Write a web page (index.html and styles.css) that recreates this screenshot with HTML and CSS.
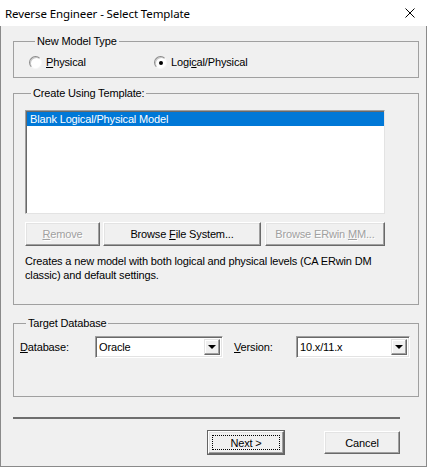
FILE: index.html
```html
<!DOCTYPE html>
<html lang="en">
<head>
<meta charset="UTF-8">
<title>Reverse Engineer - Select Template</title>
<link rel="stylesheet" href="styles.css">
</head>
<body>
<div class="window">
  <!-- title bar -->
  <div class="titlebar">
    <span class="title">Reverse Engineer - Select Template</span>
    <svg class="close" viewBox="0 0 10 10">
      <path d="M0.5 0.5L9.5 9.5M9.5 0.5L0.5 9.5"/>
    </svg>
  </div>

  <div class="client">
    <!-- model type -->
    <fieldset class="group group-type">
      <legend>New Model Type</legend>
      <div class="radios">
        <label class="radio"><span class="dot"></span><span><u>P</u>hysical</span></label>
        <label class="radio checked"><span class="dot"></span><span>Logi<u>c</u>al/Physical</span></label>
      </div>
    </fieldset>

    <!-- template -->
    <fieldset class="group group-template">
      <legend>Create Using Template:</legend>
      <div class="listbox">
        <div class="item selected">Blank Logical/Physical Model</div>
      </div>
      <div class="btn-row">
        <button class="btn btn-remove" disabled><u>R</u>emove</button>
        <button class="btn btn-browse">Browse <u>F</u>ile System...</button>
        <button class="btn btn-mm" disabled>Browse ERwin <u>M</u>M...</button>
      </div>
      <p class="desc">Creates a new model with both logical and physical levels (CA ERwin DM classic) and default settings.</p>
    </fieldset>

    <!-- target database -->
    <fieldset class="group group-target">
      <legend>Target Database</legend>
      <div class="db-row">
        <span class="lbl lbl-db"><u>D</u>atabase:</span>
        <div class="combo combo-db"><span class="value">Oracle</span><span class="arrow"></span></div>
        <span class="lbl lbl-ver"><u>V</u>ersion:</span>
        <div class="combo combo-ver"><span class="value">10.x/11.x</span><span class="arrow"></span></div>
      </div>
    </fieldset>

    <div class="separator"></div>

    <div class="footer">
      <button class="btn btn-default">Next &gt;</button>
      <button class="btn">Cancel</button>
    </div>
  </div>
</div>
</body>
</html>
```

FILE: styles.css
```css
/* page */
body {
margin: 0;
background: #f0f0f0;
font-family: "Liberation Sans", Arial, sans-serif;
font-size: 11px;
letter-spacing: -0.15px;
color: #000;
}

.window {
width: 427px;
height: 467px;
box-sizing: border-box;
display: flex;
flex-direction: column;
}

/* title bar */
.titlebar {
height: 26px;
flex: none;
background: #fff;
display: flex;
align-items: center;
justify-content: space-between;
padding: 0 12px 0 5px;
}

.title {
font-family: "Noto Sans", sans-serif;
font-size: 11.5px;
letter-spacing: -0.1px;
}

.close {
width: 10px;
height: 10px;
stroke: #000;
stroke-width: 1;
fill: none;
}

/* client area */
.client {
flex: 1;
border: 1px solid #8a8a8a;
border-top: none;
padding: 9px 7px 0 12px;
}

/* group boxes */
.group {
margin: 0;
border: 1px solid #a0a0a0;
padding: 0;
}

.group legend {
margin-left: 6px;
padding: 0 2px;
line-height: 13px;
}

.group-type {
padding: 8px 0 8px 15px;
}

.group-template {
margin-top: 9px;
padding: 10px 0 22px 11px;
}

.group-target {
margin-top: 12px;
padding: 6px 0 38px 6px;
}

/* radios */
.radios {
display: flex;
height: 13px;
}

.radio {
display: flex;
align-items: center;
gap: 4px;
line-height: 13px;
}

.radio:first-child {
width: 125px;
}

.dot {
width: 11px;
height: 11px;
border-radius: 50%;
border: 1px solid;
border-color: #8a8a8a #f8f8f8 #f8f8f8 #8a8a8a;
background: #fff;
box-shadow: inset 1px 1px #c8c8c8;
display: flex;
align-items: center;
justify-content: center;
}

.checked .dot::after {
content: "";
width: 4px;
height: 4px;
border-radius: 50%;
background: #000;
}

/* list box */
.listbox {
width: 360px;
height: 104px;
box-sizing: border-box;
background: #fff;
border: 1px solid;
border-color: #a0a0a0 #e3e3e3 #e3e3e3 #a0a0a0;
box-shadow: inset 1px 1px #696969;
padding: 1px 0 0 1px;
}

.item {
height: 14px;
line-height: 14px;
padding-left: 3px;
}

.item.selected {
background: #0078d7;
color: #fff;
}

/* buttons */
.btn {
font: inherit;
letter-spacing: inherit;
height: 24px;
padding: 0;
background: #f0f0f0;
border: 1px solid;
border-color: #fff #696969 #696969 #fff;
box-shadow: inset -1px -1px #a0a0a0, inset 1px 1px #e3e3e3;
color: #000;
}

.btn:disabled {
color: #a0a0a0;
text-shadow: 1px 1px #fff;
}

.btn-row {
display: flex;
gap: 3px;
margin-top: 8px;
}

.btn-remove {
width: 75px;
}

.btn-browse {
width: 158px;
}

.btn-mm {
width: 120px;
margin-left: 1px;
}

.desc {
margin: 8px 0 0;
width: 362px;
line-height: 14px;
}

/* target database */
.db-row {
display: flex;
align-items: center;
height: 22px;
}

.lbl-db {
width: 75px;
}

.lbl-ver {
width: 62px;
margin-left: 11px;
}

.combo {
height: 22px;
box-sizing: border-box;
background: #fff;
border: 1px solid;
border-color: #a0a0a0 #fff #fff #a0a0a0;
box-shadow: inset 1px 1px #696969, inset -1px -1px #e3e3e3;
display: flex;
align-items: center;
padding: 2px 2px 2px 3px;
}

.combo-db {
width: 128px;
}

.combo-ver {
width: 114px;
}

.combo .value {
flex: 1;
}

.arrow {
width: 16px;
height: 16px;
box-sizing: border-box;
background: #f0f0f0;
border: 1px solid;
border-color: #e3e3e3 #696969 #696969 #e3e3e3;
box-shadow: inset -1px -1px #a0a0a0, inset 1px 1px #fff;
display: flex;
align-items: center;
justify-content: center;
}

.arrow::after {
content: "";
border-left: 4px solid transparent;
border-right: 4px solid transparent;
border-top: 4px solid #000;
}

/* bottom */
.separator {
margin-top: 20px;
width: 387px;
height: 2px;
background: #6e6e6e;
}

.footer {
display: flex;
justify-content: flex-end;
gap: 40px;
margin: 12px 19px 0 0;
}

.footer .btn {
width: 76px;
height: 23px;
}

.btn-default {
outline: 1px solid #646464;
outline-offset: 0;
position: relative;
}

.btn-default::after {
content: "";
position: absolute;
inset: 3px;
border: 1px dotted #000;
}
```
